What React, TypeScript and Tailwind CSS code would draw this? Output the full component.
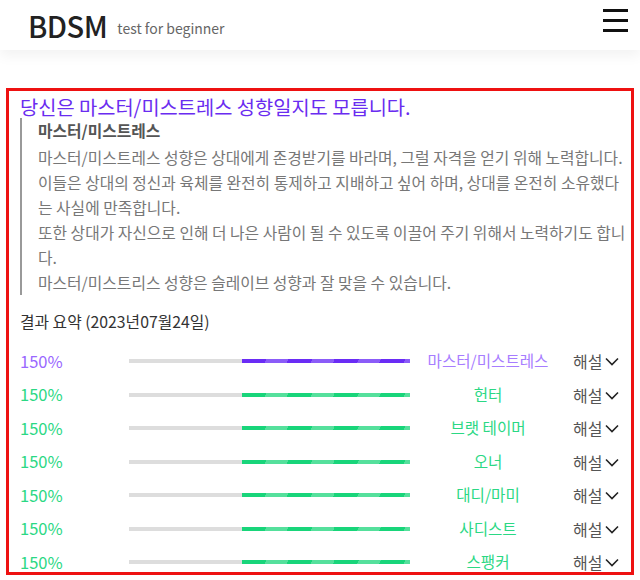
import React from "react";

type Row = { label: string; purple?: boolean };

const rows: Row[] = [
  { label: "마스터/미스트레스", purple: true },
  { label: "헌터" },
  { label: "브랫 테이머" },
  { label: "오너" },
  { label: "대디/마미" },
  { label: "사디스트" },
  { label: "스팽커" },
];

function Chevron() {
  return (
    <svg width="14" height="9" viewBox="0 0 14 9" className="ml-[3px] mt-[1px]">
      <polyline points="1,1.5 7,7.5 13,1.5" fill="none" stroke="#222" strokeWidth="1.6" />
    </svg>
  );
}

function ResultRow({ row }: { row: Row }) {
  return (
    <div className="flex items-center h-[20px]">
      <div
        className={
          row.purple
            ? "w-[109px] text-[16.5px] leading-none text-[#9a68ff]"
            : "w-[109px] text-[16.5px] leading-none text-[#2bd884]"
        }
      >
        150%
      </div>
      <div className="flex w-[281px] h-[4px]">
        <div className="w-[113px] h-full bg-[#dddddd]" />
        {row.purple ? (
          <div className="flex-1 h-full bg-[repeating-linear-gradient(115deg,#6a2cf5_0px,#6a2cf5_22px,#8b5cf8_22px,#8b5cf8_42px)]" />
        ) : (
          <div className="flex-1 h-full bg-[repeating-linear-gradient(115deg,#18d57a_0px,#18d57a_22px,#55e09c_22px,#55e09c_42px)]" />
        )}
      </div>
      <div
        className={
          row.purple
            ? "w-[156px] text-center text-[15.6px] text-[#a77dff] leading-none"
            : "w-[156px] text-center text-[15.6px] text-[#2bd884] leading-none"
        }
      >
        {row.label}
      </div>
      <div className="ml-[7px] flex items-center text-[16px] text-[#555] leading-none">
        해설
        <Chevron />
      </div>
    </div>
  );
}

export default function App() {
  return (
    <div className="w-[640px] h-[580px] overflow-hidden bg-white font-['Noto_Sans_CJK_KR','Noto_Sans',sans-serif]">
      <header className="relative z-10 h-[50px] flex items-center pl-[28px] pr-[12px] bg-white shadow-[0_6px_12px_rgba(0,0,0,0.05)]">
        <span className="text-[29px] font-medium text-[#222] leading-none tracking-[-0.5px]">BDSM</span>
        <span className="ml-[10px] mt-[6px] text-[14px] text-[#666] leading-none">test for beginner</span>
        <div className="ml-auto mb-[9px] flex flex-col gap-[7px] w-[25px]">
          <div className="h-[3px] bg-[#111]" />
          <div className="h-[3px] bg-[#111]" />
          <div className="h-[3px] bg-[#111]" />
        </div>
      </header>
      <main className="pt-[38px] px-[6px]">
        <div className="border-[3px] border-[#ee1111] pl-[11px] pr-[4px] pt-[2px]">
          <h2 className="text-[19.8px] leading-[27px] text-[#6a2cf0]">
            당신은 마스터/미스트레스 성향일지도 모릅니다.
          </h2>
          <div className="-mt-[2px] border-l-2 border-[#999] pl-[16px] text-[15.8px] leading-[25px]">
            <div className="font-bold text-[#555] mb-[2px]">마스터/미스트레스</div>
            <p className="text-[#777]">
              마스터/미스트레스 성향은 상대에게 존경받기를 바라며, 그럴 자격을 얻기 위해 노력합니다.
              <br />
              이들은 상대의 정신과 육체를 완전히 통제하고 지배하고 싶어 하며, 상대를 온전히 소유했다는 사실에 만족합니다.
              <br />
              또한 상대가 자신으로 인해 더 나은 사람이 될 수 있도록 이끌어 주기 위해서 노력하기도 합니다.
              <br />
              마스터/미스트리스 성향은 슬레이브 성향과 잘 맞을 수 있습니다.
            </p>
          </div>
          <div className="mt-[14px] text-[15.8px] leading-[25px] text-[#333]">결과 요약 (2023년07월24일)</div>
          <div className="mt-[17px] flex flex-col gap-[13.5px]">
            {rows.map((r) => (
              <ResultRow key={r.label} row={r} />
            ))}
          </div>
        </div>
      </main>
    </div>
  );
}
